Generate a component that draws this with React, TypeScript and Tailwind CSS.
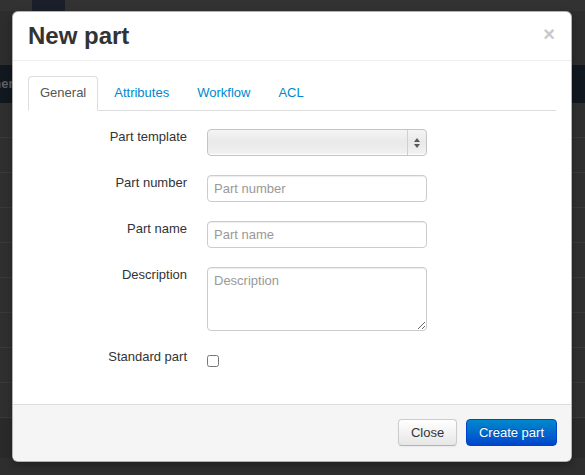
import { ChangeEvent, useState } from "react";

const font = { fontFamily: '"Liberation Sans", Arial, Helvetica, sans-serif' };

function Field({ label, children }: { label: string; children: React.ReactNode }) {
  return (
    <div className="flex items-start">
      <label className="w-[159px] shrink-0 text-right text-[13px] leading-[18px] text-[#333] -mt-px">
        {label}
      </label>
      <div className="ml-5">{children}</div>
    </div>
  );
}

function TemplateSelect() {
  return (
    <div className="relative flex h-[27px] w-[220px] overflow-hidden rounded-[4px] border border-[#c4c4c4] bg-gradient-to-b from-[#f4f4f4] via-[#e9e9e9] to-[#f2f2f2] shadow-[inset_0_-1px_0_#fff]">
      <div className="flex-1" />
      <div className="flex w-[19px] flex-col items-center justify-center gap-[2px] border-l border-[#d0d0d0]">
        <svg width="6" height="4" viewBox="0 0 6 4">
          <path d="M3 0 L6 4 L0 4 Z" fill="#5a5a5a" />
        </svg>
        <svg width="6" height="4" viewBox="0 0 6 4">
          <path d="M0 0 L6 0 L3 4 Z" fill="#5a5a5a" />
        </svg>
      </div>
    </div>
  );
}

export default function App() {
  const [tab, setTab] = useState("General");
  const [number, setNumber] = useState("");
  const [name, setName] = useState("");
  const [description, setDescription] = useState("");
  const [standard, setStandard] = useState(false);

  const tabs = ["General", "Attributes", "Workflow", "ACL"];
  const rows = Array.from({ length: 9 });

  return (
    <div className="relative h-[475px] w-[585px] overflow-hidden bg-[#2e2e2e]" style={font}>
      {/* page behind the backdrop */}
      <div className="flex h-[11px] bg-[#323232]">
        <div className="ml-[32px] w-[33px] bg-[#1b1f29]" />
      </div>
      <div className="h-[54px] bg-[#2d2d2d]" />
      <div className="flex h-[38px] items-center bg-[#12181f]">
        <span className="-ml-[24px] text-[13px] font-bold text-[#5d6168]">General</span>
      </div>
      {rows.map((_, i) => (
        <div key={i} className="h-[35px] border-b border-[#393939] bg-[#2f2f2f]" />
      ))}
      <div className="h-[40px] bg-[#2a2a2a]" />

      {/* modal */}
      <div className="absolute left-[12px] top-[11px] flex h-[451px] w-[560px] flex-col overflow-hidden rounded-[6px] border border-black/30 bg-white shadow-[0_3px_7px_rgba(0,0,0,0.3)]">
        <div className="flex h-[49px] shrink-0 items-center justify-between border-b border-[#eee] px-[15px]">
          <h3 className="text-[24px] font-bold leading-[30px] text-[#333]">New part</h3>
          <button className="-mt-[5px] mr-[1px] text-[20px] font-bold leading-[20px] text-[#c9c9c9]">×</button>
        </div>

        <div className="flex-1 px-[15px] pt-[15px]">
          <ul className="flex border-b border-[#ddd]">
            {tabs.map((t) => (
              <li key={t} className="-mb-px mr-[4px]">
                <button
                  onClick={() => setTab(t)}
                  className={
                    t === tab
                      ? "rounded-t-[4px] border border-[#ddd] border-b-white bg-white px-[11px] pb-[9px] pt-[7px] text-[13px] leading-[17px] text-[#555]"
                      : "rounded-t-[4px] border border-transparent px-[11px] pb-[9px] pt-[7px] text-[13px] leading-[17px] text-[#0088cc]"
                  }
                >
                  {t}
                </button>
              </li>
            ))}
          </ul>

          <div className="mt-[18px] flex flex-col">
            <Field label="Part template">
              <TemplateSelect />
            </Field>
            <div className="mt-[19px]">
              <Field label="Part number">
                <input
                  value={number}
                  onChange={(e: ChangeEvent<HTMLInputElement>) => setNumber(e.target.value)}
                  placeholder="Part number"
                  className="h-[27px] w-[220px] rounded-[4px] border border-[#ccc] px-[6px] text-[13px] text-[#555] shadow-[inset_0_1px_1px_rgba(0,0,0,0.075)] outline-none placeholder:text-[#999]"
                />
              </Field>
            </div>
            <div className="mt-[19px]">
              <Field label="Part name">
                <input
                  value={name}
                  onChange={(e: ChangeEvent<HTMLInputElement>) => setName(e.target.value)}
                  placeholder="Part name"
                  className="h-[27px] w-[220px] rounded-[4px] border border-[#ccc] px-[6px] text-[13px] text-[#555] shadow-[inset_0_1px_1px_rgba(0,0,0,0.075)] outline-none placeholder:text-[#999]"
                />
              </Field>
            </div>
            <div className="mt-[19px]">
              <Field label="Description">
                <textarea
                  value={description}
                  onChange={(e: ChangeEvent<HTMLTextAreaElement>) => setDescription(e.target.value)}
                  placeholder="Description"
                  className="block h-[64px] w-[220px] resize rounded-[4px] border border-[#ccc] px-[6px] py-[4px] text-[13px] leading-[18px] text-[#555] shadow-[inset_0_1px_1px_rgba(0,0,0,0.075)] outline-none placeholder:text-[#999]"
                />
              </Field>
            </div>
            <div className="mt-[18px]">
              <Field label="Standard part">
                <input
                  type="checkbox"
                  checked={standard}
                  onChange={() => setStandard(!standard)}
                  className="mt-[6px] block h-[12px] w-[12px]"
                />
              </Field>
            </div>
          </div>
        </div>

        <div className="flex h-[57px] shrink-0 items-start justify-end gap-[9px] border-t border-[#ddd] bg-[#f5f5f5] px-[14px] pt-[14px]">
          <button className="h-[27px] w-[59px] rounded-[4px] border border-[#ccc] border-b-[#b3b3b3] bg-gradient-to-b from-white to-[#e6e6e6] text-[13px] text-[#333] shadow-[inset_0_1px_0_rgba(255,255,255,0.2),0_1px_2px_rgba(0,0,0,0.05)]">
            Close
          </button>
          <button className="h-[27px] w-[91px] rounded-[4px] border border-[#0044cc] bg-gradient-to-b from-[#0088cc] to-[#0044cc] text-[13px] text-white [text-shadow:0_-1px_0_rgba(0,0,0,0.25)]">
            Create part
          </button>
        </div>
      </div>
    </div>
  );
}
